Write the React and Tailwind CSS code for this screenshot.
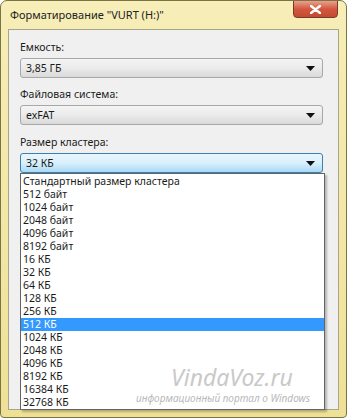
import React from 'react';

const sizes = [
  'Стандартный размер кластера',
  '512 байт',
  '1024 байт',
  '2048 байт',
  '4096 байт',
  '8192 байт',
  '16 КБ',
  '32 КБ',
  '64 КБ',
  '128 КБ',
  '256 КБ',
  '512 КБ',
  '1024 КБ',
  '2048 КБ',
  '4096 КБ',
  '8192 КБ',
  '16384 КБ',
  '32768 КБ',
];

function Arrow() {
  return (
    <svg width="9" height="5" viewBox="0 0 9 5" className="block">
      <path d="M0 0 L9 0 L4.5 5 Z" fill="#111" />
    </svg>
  );
}

// обычный комбобокс в стиле Win7
function Combo({ value, active }) {
  return (
    <div
      className={
        active
          ? 'h-[20px] flex items-center justify-between pl-[5px] pr-[7px] rounded-[3px] border border-[#3c7fb1] bg-gradient-to-b from-[#eaf6fd] via-[#d9f0fc] to-[#a7d9f5]'
          : 'h-[20px] flex items-center justify-between pl-[5px] pr-[7px] rounded-[3px] border border-[#a8a8a8] bg-gradient-to-b from-[#f4f4f4] via-[#ebebeb] to-[#d9d9d9]'
      }>
      <span className="leading-[14px]">{value}</span>
      <Arrow />
    </div>
  );
}

export default function App() {
  return (
    <div
      className="w-[347px] h-[418px] relative overflow-hidden flex flex-col bg-gradient-to-b from-[#f7eeb8] to-[#eee196] border border-[#7a7444] rounded-t-[7px] rounded-b-[4px] text-[10.5px] text-[#1a1a1a]"
      style={{ fontFamily: '"Noto Sans", "Open Sans", sans-serif' }}>
      {/* заголовок окна */}
      <div className="h-[28px] shrink-0 flex items-start justify-between pl-[9px] pr-[8px]">
        <span className="mt-[7px] leading-[14px] text-[11px] text-[#222]">Форматирование "VURT (H:)"</span>
        <div className="w-[45px] h-[18px] -mt-px rounded-b-[4px] border border-[#7a3a2a] bg-gradient-to-b from-[#e9a08d] via-[#d2573f] to-[#c34a33] flex items-center justify-center">
          <svg width="11" height="9" viewBox="0 0 11 9">
            <path d="M1 1 L10 8 M10 1 L1 8" stroke="#fff" strokeWidth="2.4" strokeLinecap="round" />
          </svg>
        </div>
      </div>

      {/* клиентская область */}
      <div className="mx-[7px] h-[381px] shrink-0 bg-[#f0f0f0] border border-[#a9a58a] pl-[11px] pr-[15px] pt-[10px]">
        <div className="leading-[14px]">Емкость:</div>
        <div className="mt-[4px]">
          <Combo value="3,85 ГБ" />
        </div>

        <div className="mt-[9px] leading-[14px]">Файловая система:</div>
        <div className="mt-[4px]">
          <Combo value="exFAT" />
        </div>

        <div className="mt-[10px] leading-[14px]">Размер кластера:</div>
        <div className="mt-[4px]">
          <Combo value="32 КБ" active />
        </div>

        {/* выпадающий список */}
        <div className="w-[305px] h-[237px] bg-white border border-[#646464] shadow-[2px_2px_2px_rgba(0,0,0,0.25)] pt-[1px]">
          {sizes.map((s) => (
            <div
              key={s}
              className={
                s === '512 КБ'
                  ? 'h-[13px] leading-[13px] pl-[2px] bg-[#3399ff] text-white'
                  : 'h-[13px] leading-[13px] pl-[2px]'
              }>
              {s}
            </div>
          ))}
        </div>
      </div>

      {/* водяной знак */}
      <div className="absolute left-[170px] top-[365px] italic text-[23px] leading-[22px] text-[#c9c9c9] pointer-events-none">
        VindaVoz.ru
      </div>
      <div className="absolute left-[135px] top-[391px] italic text-[10px] leading-[12px] text-[#b8b8b8] pointer-events-none whitespace-nowrap">
        информационный портал о Windows
      </div>
    </div>
  );
}
